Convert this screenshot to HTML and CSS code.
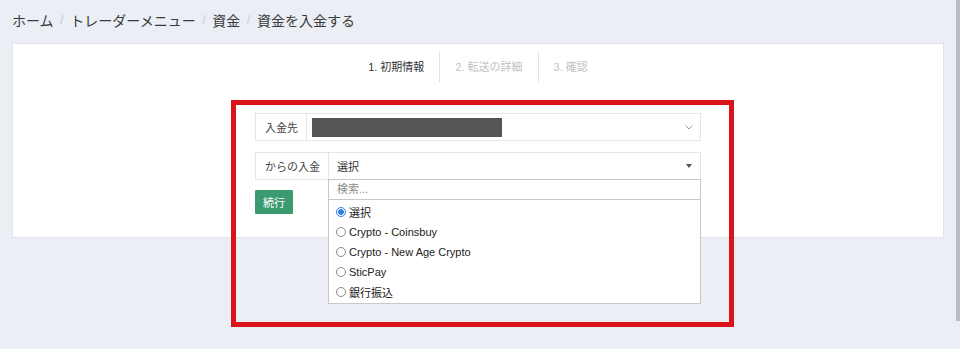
FILE: index.html
```html
<!DOCTYPE html>
<html lang="ja">
<head>
<meta charset="utf-8">
<link rel="stylesheet" href="styles.css">
</head>
<body>
<div class="page">
  <nav class="crumbs">
    <span>ホーム</span><span class="sep">/</span>
    <span>トレーダーメニュー</span><span class="sep">/</span>
    <span>資金</span><span class="sep">/</span>
    <span>資金を入金する</span>
  </nav>
  <section class="card">
    <div class="steps">
      <div class="step active">1. 初期情報</div>
      <div class="step">2. 転送の詳細</div>
      <div class="step">3. 確認</div>
    </div>
    <form class="form">
      <div class="group">
        <div class="addon">入金先</div>
        <div class="select">
          <span class="masked"></span>
          <svg class="chev" width="8" height="5" viewBox="0 0 8 5"><path d="M0.5 0.5 L4 4 L7.5 0.5" fill="none" stroke="#999" stroke-width="1"/></svg>
        </div>
      </div>
      <div class="group">
        <div class="addon">からの入金</div>
        <div class="select open">
          <span class="val">選択</span>
          <span class="caret"></span>
          <div class="menu">
            <div class="search">検索...</div>
            <ul class="opts">
              <li><span class="radio on"></span>選択</li>
              <li><span class="radio"></span>Crypto - Coinsbuy</li>
              <li><span class="radio"></span>Crypto - New Age Crypto</li>
              <li><span class="radio"></span>SticPay</li>
              <li><span class="radio"></span>銀行振込</li>
            </ul>
          </div>
        </div>
      </div>
      <div class="actions"><span class="btn">続行</span></div>
    </form>
  </section>
  <div class="highlight"></div>
  <div class="scrollbar"></div>
</div>
</body>
</html>
```
FILE: styles.css
```css
* { box-sizing: border-box; }
html, body { margin: 0; padding: 0; }
body {
  background: #ebeef4;
  font-family: "Liberation Sans", "Noto Sans CJK JP", sans-serif;
  color: #333;
  width: 960px;
  height: 349px;
  overflow: hidden;
}
.page { position: relative; width: 960px; height: 349px; }
.crumbs {
  display: flex;
  align-items: center;
  height: 43px;
  padding: 0 12px 4px;
  font-size: 14px;
  color: #3a3a3a;
}
.crumbs .sep { color: #c9ccd2; padding: 0 6.5px; font-size: 13px; }
.card {
  margin: 0 16px 0 12px;
  width: 932px;
  height: 195px;
  background: #fff;
  border: 1px solid #e1e4e9;
  display: flex;
  flex-direction: column;
  align-items: center;
  padding-top: 8px;
}
.steps { display: flex; height: 30px; align-items: center; }
.step {
  font-size: 11px;
  color: #c2c2c2;
  padding: 0 15px;
  height: 30px;
  line-height: 30px;
  border-left: 1px solid #e2e2e2;
}
.step:first-child { border-left: none; }
.step.active { color: #333; }
.form {
  width: 446px;
  margin-top: 31px;
  display: flex;
  flex-direction: column;
  gap: 11px;
}
.group {
  display: flex;
  height: 28px;
  font-size: 11px;
}
.addon {
  border: 1px solid #e6e6e6;
  border-right: none;
  padding: 0 8px 0 9px;
  display: flex;
  align-items: center;
  color: #444;
  white-space: nowrap;
}
.select {
  position: relative;
  flex: 1;
  border: 1px solid #e6e6e6;
  display: flex;
  align-items: center;
  padding: 0 6px 0 5px;
}
.masked { width: 190px; height: 19px; background: #555; }
.chev { margin-left: auto; margin-right: 1px; }
.val { padding-left: 3px; color: #333; }
.caret {
  margin-left: auto;
  margin-right: 2px;
  width: 0; height: 0;
  border-left: 3.5px solid transparent;
  border-right: 3.5px solid transparent;
  border-top: 4px solid #555;
}
.menu {
  position: absolute;
  left: -1px;
  right: -1px;
  top: 26px;
  background: #fff;
  border: 1px solid #c8c8c8;
  z-index: 2;
}
.search {
  height: 20px;
  line-height: 19px;
  padding-left: 8px;
  color: #8a8a8a;
  border-bottom: 1px solid #c8c8c8;
}
.opts { list-style: none; margin: 0; padding: 2px 0 1px; }
.opts li {
  height: 20px;
  display: flex;
  align-items: center;
  padding-left: 7px;
  color: #222;
}
.radio {
  width: 10px; height: 10px;
  border-radius: 50%;
  border: 1px solid #8a8a8a;
  margin-right: 3px;
  background: #fff;
}
.radio.on {
  border: 1px solid #2f7fe0;
  background: radial-gradient(circle, #2f7fe0 0 2.6px, #fff 3.2px);
}
.actions { margin-top: -1px; }
.btn {
  display: inline-flex;
  align-items: center;
  justify-content: center;
  width: 38px;
  height: 24px;
  background: #3b9a70;
  color: #fff;
  font-size: 11px;
  border-radius: 1px;
}
.highlight {
  position: absolute;
  left: 231px;
  top: 100px;
  width: 503px;
  height: 227px;
  border: 5px solid #d9141b;
  pointer-events: none;
  z-index: 3;
}
.scrollbar {
  position: absolute;
  right: 0;
  top: 0;
  width: 4px;
  height: 321px;
  background: #b9bbbf;
}
```
